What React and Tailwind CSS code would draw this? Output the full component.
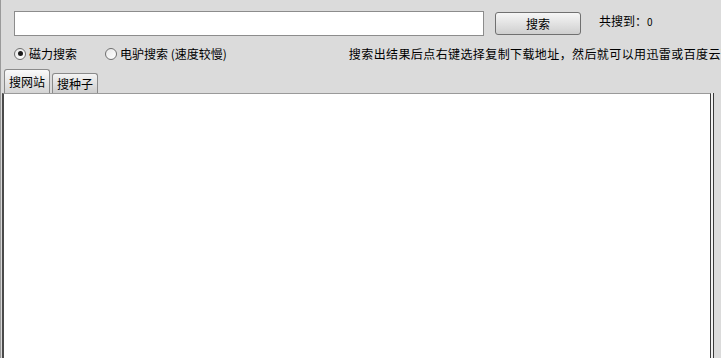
import React from "react";

const FONT = { fontFamily: '"Noto Sans CJK SC", "Noto Sans", sans-serif' };

function Radio({ checked, label, className = "" }) {
  return (
    <label className={`flex items-center gap-[3px] ${className}`}>
      <span className="w-[12px] h-[12px] rounded-full border border-[#6f6f6f] bg-gradient-to-br from-[#e8e8e8] to-white flex items-center justify-center">
        {checked && <span className="w-[5px] h-[5px] rounded-full bg-[#1a1a1a]" />}
      </span>
      <span>{label}</span>
    </label>
  );
}

function Tab({ label, active }) {
  return (
    <div
      className={
        active
          ? "w-[46px] h-[24px] mt-0 border border-b-0 border-[#8a8a8a] rounded-t-[3px] bg-gradient-to-b from-[#fafafa] to-[#d4d4d4] flex items-center justify-center relative z-10"
          : "w-[46px] h-[20px] mt-[4px] border border-b-0 border-[#8a8a8a] rounded-t-[3px] bg-gradient-to-b from-[#f4f4f4] to-[#cdcdcd] flex items-center justify-center"
      }
    >
      {label}
    </div>
  );
}

export default function App() {
  return (
    <div
      style={FONT}
      className="w-[721px] h-[358px] overflow-hidden bg-[#dbdbdb] border-l border-[#9a9a9a] flex flex-col text-[12px] leading-[14px] text-black"
    >
      {/* top search row */}
      <div className="flex items-start pt-[11px] pl-[13px] h-[37px]">
        <input
          className="w-[470px] h-[25px] bg-white border border-[#8c8c8c] outline-none px-1"
          defaultValue=""
        />
        <button className="ml-[11px] mt-[1px] w-[86px] h-[23px] rounded-[3px] border border-[#707070] bg-gradient-to-b from-[#f6f6f6] to-[#cfcfcf] flex items-center justify-center">
          搜索
        </button>
        <div className="ml-[18px] mt-[3px] whitespace-nowrap">
          共搜到：<span className="text-[10px]">0</span>
        </div>
      </div>

      {/* options row */}
      <div className="flex items-center h-[33px] pl-[13px] whitespace-nowrap overflow-hidden">
        <Radio checked label="磁力搜索" />
        <Radio label="电驴搜索 (速度较慢)" className="ml-[28px]" />
        <div className="ml-[122px] tracking-[0.4px]">
          搜索出结果后点右键选择复制下载地址，然后就可以用迅雷或百度云下载了
        </div>
      </div>

      {/* tabs */}
      <div className="flex items-end gap-[2px] pl-[3px] h-[23px]">
        <Tab label="搜网站" active />
        <Tab label="搜种子" />
      </div>

      {/* panel */}
      <div className="flex flex-1 pl-[1px]">
        <div className="bg-white border-l-2 border-[#4a4a4a] border-t border-t-[#9a9a9a] border-r border-r-[#3a3a3a] w-[709px] flex-none" />
        <div className="w-[2px] bg-[#f2f2f2]" />
        <div className="w-[1px] bg-[#3a3a3a]" />
      </div>
    </div>
  );
}
